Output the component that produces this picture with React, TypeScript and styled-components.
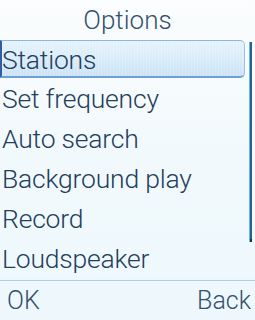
import styled, { createGlobalStyle } from 'styled-components';

const GlobalStyle = createGlobalStyle`
  html, body {
    margin: 0;
    padding: 0;
  }
  body {
    width: 255px;
    height: 320px;
    overflow: hidden;
    font-family: Roboto, "Liberation Sans", Arial, sans-serif;
    font-weight: 300;
  }
`;

const Screen = styled.div`
  width: 255px;
  height: 320px;
  display: flex;
  flex-direction: column;
  background: linear-gradient(180deg, #fbfdfe 0%, #f1f9fc 50%, #eef8fc 100%);
  color: #243e5c;
`;

const Title = styled.div`
  height: 39px;
  display: flex;
  align-items: center;
  justify-content: center;
  font-size: 26px;
  color: #33506f;
  padding-top: 1px;
  box-sizing: border-box;
`;

const Body = styled.div`
  position: relative;
  flex: 1;
  display: flex;
`;

const List = styled.ul`
  list-style: none;
  margin: 0;
  padding: 0;
  flex: 1;
`;

const Item = styled.li<{ $active?: boolean }>`
  height: 40px;
  line-height: 40px;
  font-size: 26.5px;
  padding-left: 2px;
  margin-right: 10px;
  box-sizing: border-box;
  white-space: nowrap;
  letter-spacing: -0.2px;
  ${({ $active }) =>
    $active &&
    `
    height: 38px;
    line-height: 38px;
    margin-top: 1px;
    margin-bottom: 1px;
    background:
      repeating-linear-gradient(90deg, rgba(255,255,255,0.18) 0 1px, transparent 1px 3px),
      linear-gradient(180deg, #e6f3fc 0%, #d7ebf9 55%, #cbe3f6 100%);
    border-top: 1px solid #8fb6df;
    border-bottom: 2px solid #6f9fd0;
    border-right: 1px solid #9cc0e6;
    border-left: 2px solid #2f5fa0;
    border-radius: 0 5px 5px 0;
    padding-left: 0;
  `}
`;

const Scrollbar = styled.div`
  position: absolute;
  right: 3px;
  top: 3px;
  width: 2px;
  height: 200px;
  background: #2a5f8e;
  box-shadow: -1px 0 0 #5fb8de;
  &::after {
    content: '';
    position: absolute;
    left: 0;
    bottom: 0;
    width: 2px;
    height: 3px;
    background: #1c2f44;
  }
`;

const SoftKeys = styled.div`
  height: 40px;
  border-top: 1px solid #a9cfe6;
  display: flex;
  align-items: center;
  justify-content: space-between;
  padding: 0 4px 0 7px;
  font-size: 25px;
  color: #33506f;
  box-sizing: border-box;
`;

const items = [
  'Stations',
  'Set frequency',
  'Auto search',
  'Background play',
  'Record',
  'Loudspeaker',
];

export default function App() {
  return (
    <>
      <GlobalStyle />
      <Screen>
        <Title>Options</Title>
        <Body>
          <List>
            {items.map((label, i) => (
              <Item key={label} $active={i === 0}>
                {label}
              </Item>
            ))}
          </List>
          <Scrollbar />
        </Body>
        <SoftKeys>
          <span>OK</span>
          <span>Back</span>
        </SoftKeys>
      </Screen>
    </>
  );
}
